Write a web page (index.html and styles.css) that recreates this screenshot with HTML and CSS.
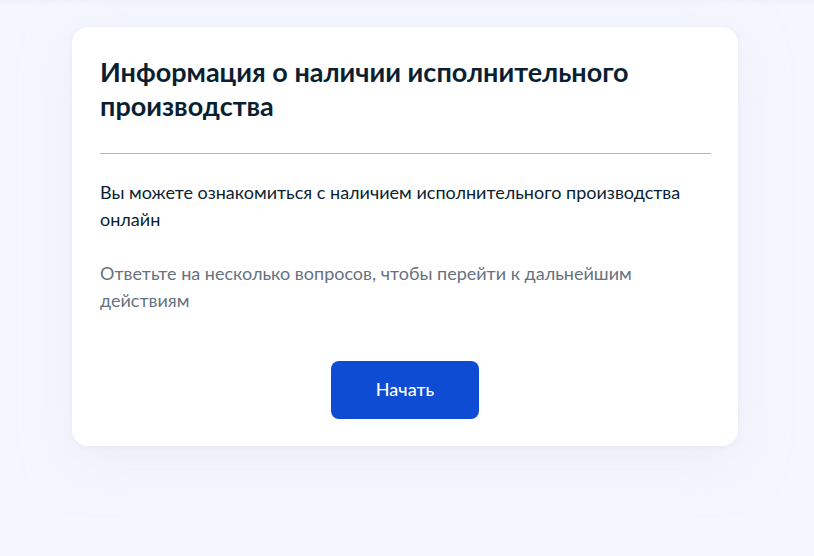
FILE: index.html
```html
<!DOCTYPE html>
<html lang="ru">
<head>
<meta charset="utf-8">
<link rel="stylesheet" href="styles.css">
</head>
<body>
<div class="topbar"></div>
<main class="page">
  <section class="card">
    <h1 class="title">Информация о наличии исполнительного производства</h1>
    <hr class="divider">
    <p class="text">Вы можете ознакомиться с наличием исполнительного производства онлайн</p>
    <p class="hint">Ответьте на несколько вопросов, чтобы перейти к дальнейшим действиям</p>
    <div class="actions">
      <button class="btn" type="button">Начать</button>
    </div>
  </section>
</main>
</body>
</html>
```
FILE: styles.css
```css
* { box-sizing: border-box; }
html, body { margin: 0; padding: 0; }
body {
  width: 814px;
  height: 556px;
  overflow: hidden;
  background: #f5f7fe;
  font-family: Lato, "Noto Sans", sans-serif;
  color: #0b1f33;
}
.topbar {
  height: 6px;
  background: linear-gradient(#eef1f8, #f5f7fe);
}
.page {
  padding: 21px 76px 0 72px;
}
.card {
  width: 666px;
  background: #fff;
  border-radius: 16px;
  box-shadow: 0 1px 4px rgba(228, 232, 242, 0.9), 0 16px 48px rgba(226, 231, 245, 0.55);
  padding: 28px 28px 27px 28px;
}
.title {
  margin: 0;
  font-size: 27px;
  line-height: 34px;
  font-weight: 700;
  color: #0b1f33;
  width: 560px;
}
.divider {
  margin: 30px -1px 0 0;
  border: 0;
  border-top: 1px solid #b0b8c8;
  height: 0;
}
.text {
  margin: 25px 0 0;
  font-size: 18px;
  line-height: 27px;
  color: #0b1f33;
}
.hint {
  margin: 27px 0 0;
  font-size: 18px;
  line-height: 27px;
  color: #66727f;
}
.actions {
  display: flex;
  justify-content: center;
  margin-top: 47px;
}
.btn {
  width: 148px;
  height: 58px;
  padding: 0 0 3px;
  border: 0;
  border-radius: 8px;
  background: #0d4cd3;
  color: #fff;
  font-family: Lato, "Noto Sans", sans-serif;
  font-size: 18px;
  font-weight: 500;
}
```
